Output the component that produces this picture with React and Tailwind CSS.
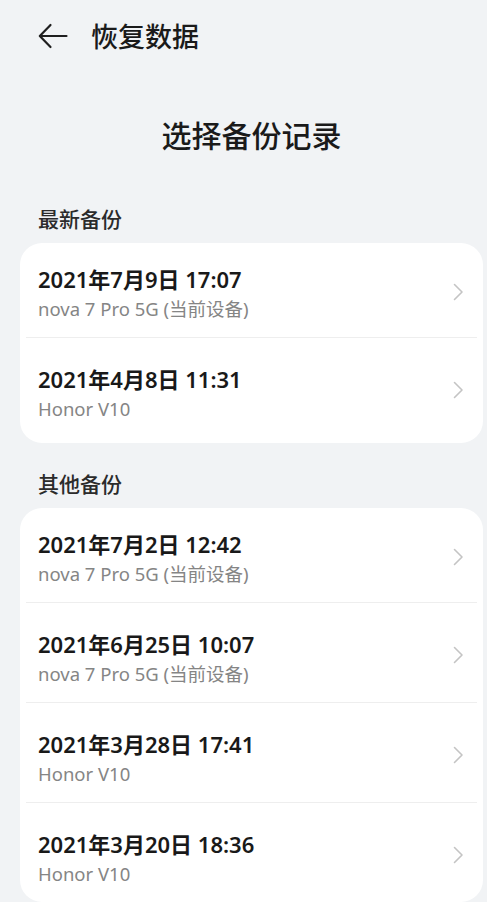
import React from "react";

const font = { fontFamily: '"Noto Sans CJK SC", "Noto Sans", sans-serif' };
const latin = { fontFamily: '"Noto Sans", "Noto Sans CJK SC", sans-serif' };

function Chevron() {
  return (
    <svg width="11" height="18" viewBox="0 0 11 18" fill="none" className="shrink-0">
      <path d="M1.5 1.5 L9 9 L1.5 16.5" stroke="#c4c4c4" strokeWidth="1.6" strokeLinecap="round" strokeLinejoin="round" />
    </svg>
  );
}

function Row({ title, sub, first, divider }) {
  return (
    <div className="flex flex-col">
      {divider && <div className="mx-[6px] h-px bg-[#eeeeee]" />}
      <div className={`flex items-center pl-[18px] pr-[19px] ${first ? "h-[94px]" : "h-[99px]"}`}>
        <div className={`flex-1 flex flex-col self-start ${first ? "pt-[22px]" : "pt-[27px]"}`} style={latin}>
          <div className="text-[22px] leading-[28px] font-semibold text-[#191919]">{title}</div>
          <div className="mt-[4px] text-[18.5px] leading-[24px] text-[#858585]">{sub}</div>
        </div>
        <div className="pt-[4px]">
          <Chevron />
        </div>
      </div>
    </div>
  );
}

function Card({ items, extraBottom }) {
  return (
    <div className={`bg-white rounded-[22px] flex flex-col ${extraBottom}`}>
      {items.map((it, i) => (
        <Row key={i} title={it[0]} sub={it[1]} first={i === 0} divider={i > 0} />
      ))}
    </div>
  );
}

export default function App() {
  const nova = "nova 7 Pro 5G (当前设备)";
  const honor = "Honor V10";
  return (
    <div className="w-[487px] h-[902px] overflow-hidden bg-[#f1f3f5]" style={font}>
      <div className="flex items-center h-[71px] pl-[38px]">
        <svg width="30" height="26" viewBox="0 0 30 26" fill="none">
          <path d="M28.5 13 H2.5 M12.5 2 L1.8 13 L12.5 24" stroke="#1f1f1f" strokeWidth="2.2" strokeLinecap="round" strokeLinejoin="round" />
        </svg>
        <div className="ml-[23px] text-[27px] leading-[34px] font-medium text-[#1a1a1a]">恢复数据</div>
      </div>
      <div className="pl-[20px] pr-[4px]">
        <div className="mt-[44px] text-center text-[30px] leading-[38px] font-medium text-[#1a1a1a]">选择备份记录</div>
        <div className="mt-[51px] pl-[18px] text-[21px] leading-[28px] font-medium text-[#2b2b2b]">最新备份</div>
        <div className="mt-[11px]">
          <Card
            items={[
              ["2021年7月9日 17:07", nova],
              ["2021年4月8日 11:31", honor],
            ]}
            extraBottom="pb-[6px]"
          />
        </div>
        <div className="mt-[26px] pl-[18px] text-[21px] leading-[28px] font-medium text-[#2b2b2b]">其他备份</div>
        <div className="mt-[11px]">
          <Card
            items={[
              ["2021年7月2日 12:42", nova],
              ["2021年6月25日 10:07", nova],
              ["2021年3月28日 17:41", honor],
              ["2021年3月20日 18:36", honor],
            ]}
            extraBottom=""
          />
        </div>
      </div>
    </div>
  );
}
